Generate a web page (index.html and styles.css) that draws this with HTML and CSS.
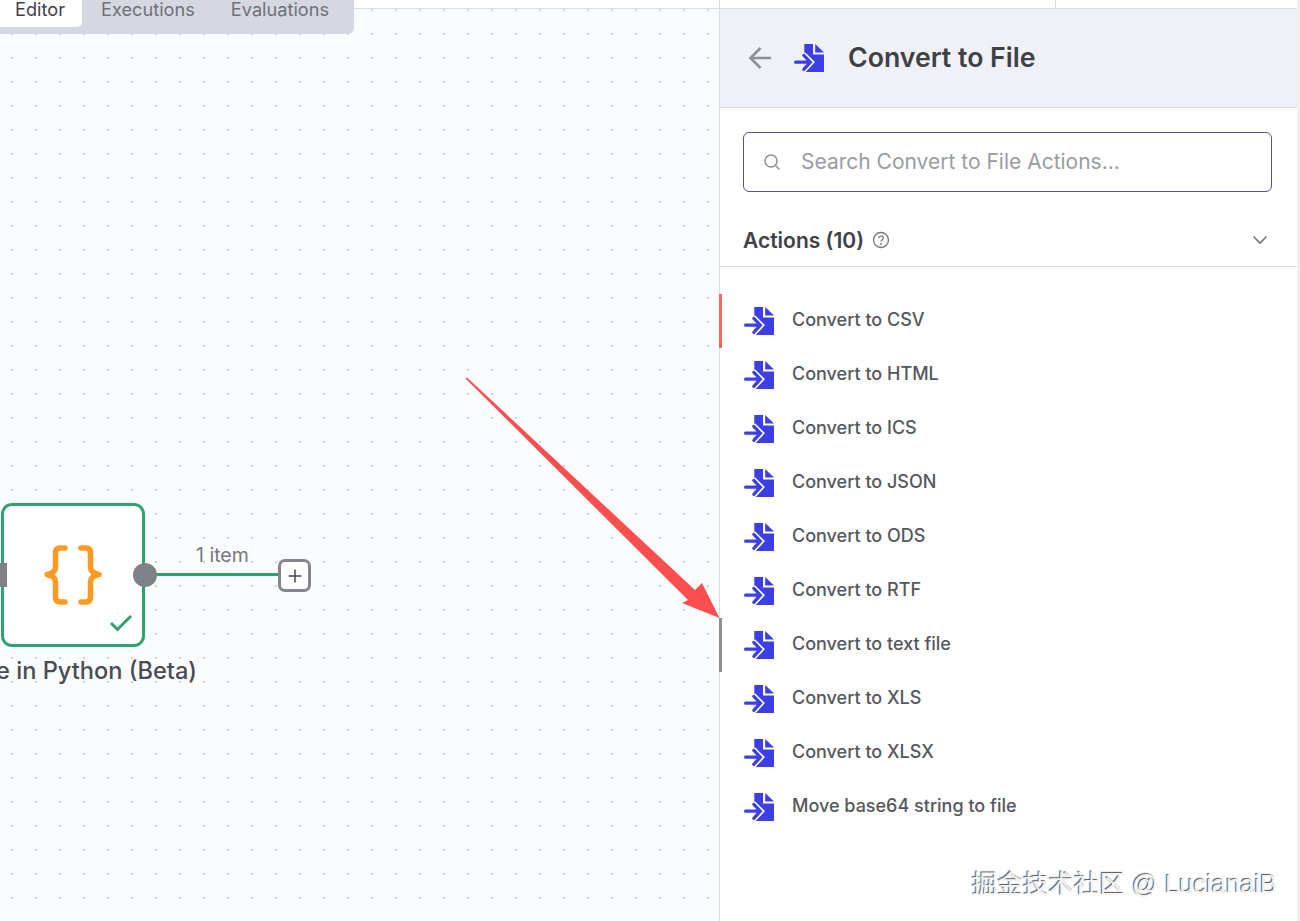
FILE: index.html
```html
<!DOCTYPE html>
<html lang="en">
<head>
  <meta charset="UTF-8">
  <title>Convert to File</title>
  <link rel="stylesheet" href="styles.css">
</head>
<body>
  <svg class="defs" width="0" height="0">
    <symbol id="file-icon" viewBox="0 0 30 28">
      <path fill="#3b3fe4" d="M10.3 0H19V10.5H30V28H10.300Z"/>
      <path fill="#3b3fe4" d="M21.200 0L30 8.600H21.200Z"/>
      <path fill="none" stroke="#fff" stroke-width="4.500" d="M6 18.200H13"/>
      <path fill="none" stroke="#fff" stroke-width="6" d="M9 10.500L16.800 18.200L9 26.500"/>
      <path fill="none" stroke="#3b3fe4" stroke-width="3.200" stroke-linecap="round" d="M1.600 18.200H15M9.800 11.400L16.400 18.200L9.800 25.400"/>
    </symbol>
  </svg>

  <div class="app">
    <div class="canvas">
      <div class="node">
        <svg class="node-icon" width="58" height="60" viewBox="0 0 58 60">
          <path fill="none" stroke="#ff9922" stroke-width="5.500" stroke-linecap="round" stroke-linejoin="round" d="M21 3H16Q11.500 3 11.500 8V22Q11.500 28 3 29.500Q11.500 31 11.500 37V52Q11.500 57 16 57H21M37 3H42Q46.500 3 46.500 8V22Q46.500 28 55 29.500Q46.500 31 46.500 37V52Q46.500 57 42 57H37"/>
        </svg>
        <svg class="node-check" width="24" height="18" viewBox="0 0 24 18">
          <path fill="none" stroke="#2ea36f" stroke-width="3" d="M2 9L8.500 15.500L22 2"/>
        </svg>
      </div>
      <span class="port-in"></span>
      <span class="port-out"></span>
      <span class="edge"></span>
      <span class="edge-label">1 item</span>
      <span class="edge-add">
        <svg width="16" height="16" viewBox="0 0 16 16"><path stroke="#45474d" stroke-width="1.500" d="M8 1.500V14.500M1.500 8H14.500"/></svg>
      </span>
      <div class="node-label">Code in Python (Beta)</div>
    </div>

    <div class="tabs">
      <span class="tab tab-active">Editor</span>
      <span class="tab">Executions</span>
      <span class="tab">Evaluations</span>
    </div>

    <aside class="panel">
      <div class="top-strip"><span class="top-divider"></span></div>
      <header class="panel-head">
        <svg class="back" width="24" height="24" viewBox="0 0 24 24">
          <path fill="none" stroke="#8e9096" stroke-width="2.600" d="M23 12H2.500M12.500 2L2.500 12L12.500 22"/>
        </svg>
        <svg class="head-icon" width="30" height="28"><use href="#file-icon"/></svg>
        <h1>Convert to File</h1>
      </header>

      <div class="search-wrap">
        <div class="search">
          <svg width="18" height="18" viewBox="0 0 18 18">
            <circle cx="8" cy="8" r="6" fill="none" stroke="#8e9096" stroke-width="1.500"/>
            <path stroke="#8e9096" stroke-width="1.500" d="M12.500 12.500L16.500 16.500"/>
          </svg>
          <span class="placeholder">Search Convert to File Actions...</span>
        </div>
      </div>

      <div class="section-head">
        <span class="section-title">Actions (10)</span>
        <svg class="help" width="18" height="18" viewBox="0 0 18 18">
          <circle cx="9" cy="9" r="7.500" fill="none" stroke="#74767c" stroke-width="1.300"/>
          <path fill="none" stroke="#74767c" stroke-width="1.300" d="M6.800 7.200C6.800 4.500 11.300 4.500 11.300 7.200C11.300 8.800 9 8.800 9 10.600"/>
          <circle cx="9" cy="13" r="0.900" fill="#74767c"/>
        </svg>
        <svg class="chevron" width="16" height="10" viewBox="0 0 16 10">
          <path fill="none" stroke="#74767c" stroke-width="1.700" d="M1.500 1.500L8 8L14.500 1.500"/>
        </svg>
      </div>

      <ul class="actions">
        <li class="action action-active"><svg width="30" height="28"><use href="#file-icon"/></svg><span class="action-name">Convert to CSV</span></li>
        <li class="action"><svg width="30" height="28"><use href="#file-icon"/></svg><span class="action-name">Convert to HTML</span></li>
        <li class="action"><svg width="30" height="28"><use href="#file-icon"/></svg><span class="action-name">Convert to ICS</span></li>
        <li class="action"><svg width="30" height="28"><use href="#file-icon"/></svg><span class="action-name">Convert to JSON</span></li>
        <li class="action"><svg width="30" height="28"><use href="#file-icon"/></svg><span class="action-name">Convert to ODS</span></li>
        <li class="action"><svg width="30" height="28"><use href="#file-icon"/></svg><span class="action-name">Convert to RTF</span></li>
        <li class="action action-hover"><svg width="30" height="28"><use href="#file-icon"/></svg><span class="action-name">Convert to text file</span></li>
        <li class="action"><svg width="30" height="28"><use href="#file-icon"/></svg><span class="action-name">Convert to XLS</span></li>
        <li class="action"><svg width="30" height="28"><use href="#file-icon"/></svg><span class="action-name">Convert to XLSX</span></li>
        <li class="action"><svg width="30" height="28"><use href="#file-icon"/></svg><span class="action-name">Move base64 string to file</span></li>
      </ul>
    </aside>
  </div>

  <svg class="annotation" width="280" height="260" viewBox="460 370 280 260">
    <path fill="#fb4f4f" d="M465.500 378.500L467 377.500L695 590L702 583L719.500 618L682 603L688 600Z"/>
  </svg>

  <div class="watermark">掘金技术社区 @ LucianaiB</div>
</body>
</html>
```

FILE: styles.css
```css
html, body {
  margin: 0;
  padding: 0;
  height: 100%;
  overflow: hidden;
}
body {
  position: relative;
  font-family: Inter, "Noto Sans", sans-serif;
  background-color: #ffffff;
  color: #3f4147;
}
.defs {
  position: absolute;
}
.app {
  display: flex;
  height: 921px;
}

/* canvas */
.canvas {
  position: relative;
  width: 719px;
  flex-shrink: 0;
  overflow: hidden;
  box-sizing: border-box;
  border-top: 1px solid #dcdde2;
  margin-top: 8px;
  background-color: #fbfcfe;
  background-image: radial-gradient(circle, #cfd0d5 1px, transparent 1.2px);
  background-size: 24px 24px;
  background-position: 0 -11px;
}
.tabs {
  position: absolute;
  top: 0;
  left: 0;
  display: flex;
  align-items: flex-start;
  height: 34px;
  padding-right: 7px;
  background-color: #d5d8e1;
  border-bottom-right-radius: 6px;
}
.tab {
  padding: 0 18px;
  height: 27px;
  line-height: 18px;
  font-size: 18.200px;
  color: #6f7178;
}
.tab-active {
  padding-left: 15px;
  padding-right: 17px;
  margin-right: 1px;
  background-color: #ffffff;
  color: #3f4147;
  border-bottom-right-radius: 5px;
}
.node {
  position: absolute;
  left: 1px;
  top: 494px;
  width: 144px;
  height: 144px;
  box-sizing: border-box;
  display: flex;
  align-items: center;
  justify-content: center;
  background-color: #ffffff;
  border: 3px solid #2ea36f;
  border-radius: 11px;
}
.node-check {
  position: absolute;
  right: 9px;
  bottom: 12px;
}
.port-in {
  position: absolute;
  left: 0;
  top: 554px;
  width: 7px;
  height: 24px;
  background-color: #7f8186;
}
.port-out {
  position: absolute;
  left: 133px;
  top: 554px;
  width: 24px;
  height: 24px;
  border-radius: 50%;
  background-color: #7f8186;
}
.edge {
  position: absolute;
  left: 157px;
  top: 564px;
  width: 122px;
  height: 3px;
  background-color: #2ea36f;
}
.edge-label {
  position: absolute;
  left: 196px;
  top: 535px;
  font-size: 19.500px;
  line-height: 22px;
  color: #74767c;
}
.edge-add {
  position: absolute;
  left: 278px;
  top: 550px;
  width: 33px;
  height: 33px;
  box-sizing: border-box;
  display: flex;
  align-items: center;
  justify-content: center;
  background-color: #ffffff;
  border: 3px solid #84868b;
  border-radius: 7px;
}
.node-label {
  position: absolute;
  left: -84px;
  width: 281px;
  top: 648px;
  font-size: 23.600px;
  line-height: 28px;
  font-weight: 450;
  color: #4a4c52;
  white-space: nowrap;
  text-align: right;
}

/* side panel */
.panel {
  flex: 1;
  display: flex;
  flex-direction: column;
  border-left: 1px solid #dcdde2;
  border-right: 3px solid #f0f0f0;
  position: relative;
}
.top-strip {
  height: 8px;
  flex-shrink: 0;
  position: relative;
  border-bottom: 1px solid #dcdde2;
}
.top-divider {
  position: absolute;
  left: 335px;
  top: 0;
  bottom: 0;
  width: 1px;
  background-color: #dcdde2;
}
.panel-head {
  display: flex;
  align-items: center;
  height: 99px;
  box-sizing: border-box;
  padding-left: 28px;
  background-color: #f0f1f7;
  border-bottom: 1px solid #dcdde2;
}
.back {
  margin-right: 22px;
}
.head-icon {
  margin-right: 24px;
}
.panel-head h1 {
  margin: 0 0 2px;
  font-size: 26.700px;
  font-weight: 600;
  color: #3f4147;
}
.search-wrap {
  padding: 24px 25px 0 23px;
}
.search {
  display: flex;
  align-items: center;
  height: 60px;
  box-sizing: border-box;
  padding-left: 19px;
  gap: 20px;
  border: 1px solid #5a4f9c;
  border-radius: 6px;
}
.placeholder {
  margin-bottom: 2px;
  font-size: 21px;
  color: #9a9ca4;
}
.section-head {
  display: flex;
  align-items: center;
  height: 75px;
  box-sizing: border-box;
  padding: 22px 29px 0 23px;
  border-bottom: 1px solid #dcdde2;
}
.section-title {
  font-size: 21px;
  font-weight: 600;
}
.help {
  margin-left: 8px;
}
.chevron {
  margin-left: auto;
}
.actions {
  list-style: none;
  margin: 27px 0 0;
  padding: 0;
}
.action {
  position: relative;
  display: flex;
  align-items: center;
  gap: 18px;
  height: 54px;
  padding-left: 24px;
  font-size: 18px;
  font-weight: 450;
  color: #55575d;
}
.action-name {
  margin-bottom: 4px;
}
.action-active::before,
.action-hover::before {
  content: "";
  position: absolute;
  left: -1px;
  top: 0;
  bottom: 0;
  width: 3px;
}
.action-active::before {
  background-color: #f4695a;
}
.action-hover::before {
  background-color: #8e8e90;
}

/* things over the screenshot */
.annotation {
  position: absolute;
  left: 460px;
  top: 370px;
}
.watermark {
  position: absolute;
  left: 972px;
  top: 867px;
  font-family: "Liberation Sans", "Noto Sans CJK SC", sans-serif;
  font-size: 25.500px;
  line-height: 34px;
  color: #f4f4f4;
  text-shadow: -1px -1px 1px #555555;
  white-space: nowrap;
}
```
